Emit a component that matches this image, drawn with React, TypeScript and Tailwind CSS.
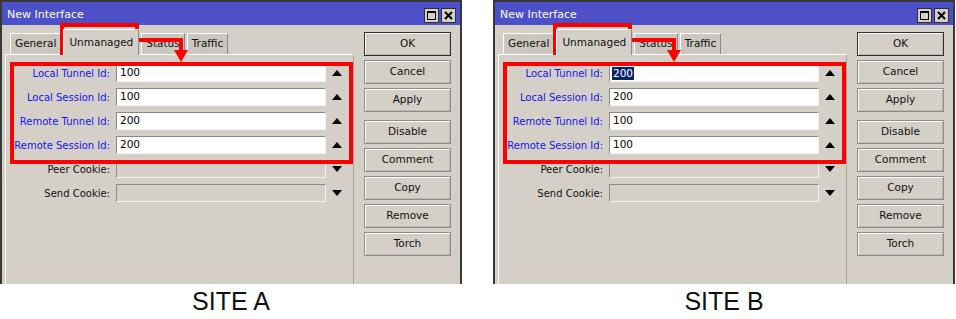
import React from "react";

const font = { fontFamily: '"DejaVu Sans", Verdana, sans-serif' };

function Arrow({ up }: { up: boolean }) {
  return (
    <svg width="10" height="6" viewBox="0 0 10 6" className="block">
      {up ? <polygon points="0,6 10,6 5,0" fill="#000" /> : <polygon points="0,0 10,0 5,6" fill="#000" />}
    </svg>
  );
}

function Field({
  label,
  value,
  blue,
  disabled,
  up,
  selected,
}: {
  label: string;
  value?: string;
  blue?: boolean;
  disabled?: boolean;
  up: boolean;
  selected?: boolean;
}) {
  return (
    <div className="flex h-[24px] items-center">
      <div className={`w-[104px] shrink-0 whitespace-nowrap text-right text-[10px] ${blue ? "text-[#1414f0]" : "text-[#111]"}`}>
        {label}
      </div>
      <div
        className={`ml-[6px] flex h-[18px] w-[210px] items-center border border-t-[#8a8a8a] border-l-[#8a8a8a] border-b-[#f4f4f4] border-r-[#f4f4f4] pl-[2px] text-[10.5px] text-black ${
          disabled ? "bg-[#d4d0c8]" : "bg-white"
        }`}
      >
        {value !== undefined &&
          (selected ? (
            <span className="bg-[#0a246a] px-[1px] leading-[13px] text-white">{value}</span>
          ) : (
            <span className="px-[1px]">{value}</span>
          ))}
      </div>
      <div className="flex w-[22px] justify-center">
        <Arrow up={up} />
      </div>
    </div>
  );
}

function Btn({ label, isDefault }: { label: string; isDefault?: boolean }) {
  return (
    <div
      className={`flex h-[24px] w-[87px] items-center justify-center border text-[10.5px] text-[#111] shadow-[inset_1px_1px_0_#ffffff,inset_-1px_-1px_0_#bcb8b0] ${
        isDefault ? "border-[#303030]" : "border-[#8c8c8c]"
      }`}
    >
      {label}
    </div>
  );
}

function Tab({ label, active }: { label: string; active?: boolean }) {
  return (
    <div
      className={`flex items-center justify-center border-l border-t border-r border-l-white border-t-white border-r-[#8a8a8a] text-[10.5px] text-[#111] ${
        active ? "relative z-10 -mb-[1px] h-[26px] bg-[#d4d0c8] px-[5px]" : "h-[21px] bg-[#cbc7bf] px-[4px]"
      }`}
    >
      {label}
    </div>
  );
}

function Win({ vals, selFirst }: { vals: string[]; selFirst?: boolean }) {
  return (
    <div className="relative flex h-[284px] w-[462px] flex-col border-x-2 border-t-2 border-[#383838] bg-[#d4d0c8]" style={font}>
      <div className="flex h-[23px] items-center justify-between bg-[#4d50c9] pl-[5px] pr-[4px] pt-[3px]">
        <span className="text-[11px] text-white">New Interface</span>
        <div className="flex gap-[2px]">
          <div className="flex h-[15px] w-[15px] items-center justify-center border border-[#303030] bg-[#d4d0c8]">
            <div className="h-[9px] w-[9px] border border-black border-t-2" />
          </div>
          <div className="flex h-[15px] w-[15px] items-center justify-center border border-[#303030] bg-[#d4d0c8]">
            <svg width="9" height="9" viewBox="0 0 9 9">
              <path d="M1 1 L8 8 M8 1 L1 8" stroke="#000" strokeWidth="2" />
            </svg>
          </div>
        </div>
      </div>
      <div className="flex flex-1">
        <div className="flex w-[352px] flex-col pl-[3px]">
          <div className="flex h-[29px] items-end gap-[2px] pl-[5px]">
            <Tab label="General" />
            <Tab label="Unmanaged" active />
            <Tab label="Status" />
            <Tab label="Traffic" />
          </div>
          <div className="flex-1 border-l border-t border-r border-l-white border-t-white border-r-[#a8a49c] pt-[6px]">
            <Field label="Local Tunnel Id:" value={vals[0]} blue up selected={selFirst} />
            <Field label="Local Session Id:" value={vals[1]} blue up />
            <Field label="Remote Tunnel Id:" value={vals[2]} blue up />
            <Field label="Remote Session Id:" value={vals[3]} blue up />
            <Field label="Peer Cookie:" disabled up={false} />
            <Field label="Send Cookie:" disabled up={false} />
          </div>
        </div>
        <div className="flex flex-col pl-[10px] pt-[7px]">
          <Btn label="OK" isDefault />
          <div className="mt-[4px]"><Btn label="Cancel" /></div>
          <div className="mt-[4px]"><Btn label="Apply" /></div>
          <div className="mt-[8px]"><Btn label="Disable" /></div>
          <div className="mt-[4px]"><Btn label="Comment" /></div>
          <div className="mt-[4px]"><Btn label="Copy" /></div>
          <div className="mt-[4px]"><Btn label="Remove" /></div>
          <div className="mt-[4px]"><Btn label="Torch" /></div>
        </div>
      </div>
      {/* annotations */}
      <div className="absolute left-[58px] top-[21px] h-[32px] w-[79px] border-4 border-[#ff0000]" />
      <div className="absolute left-[8px] top-[60px] h-[102px] w-[343px] border-4 border-[#ff0000]" />
      <svg className="absolute left-0 top-0" width="220" height="70" viewBox="0 0 220 70">
        <path d="M135 38 L179 38 L179 52" stroke="#ff0000" strokeWidth="4" fill="none" />
        <polygon points="172,48 186,48 179,60" fill="#ff0000" />
      </svg>
    </div>
  );
}

export default function App() {
  return (
    <div className="h-[319px] w-[956px] bg-white" style={{ fontFamily: '"Liberation Sans", Arial, sans-serif' }}>
      <div className="flex gap-[31px]">
        <Win vals={["100", "100", "200", "200"]} />
        <Win vals={["200", "200", "100", "100"]} selFirst />
      </div>
      <div className="flex">
        <div className="flex h-[35px] w-[462px] items-center justify-center text-[25px] text-[#111]">SITE A</div>
        <div className="ml-[31px] flex h-[35px] w-[462px] items-center justify-center text-[25px] text-[#111]">SITE B</div>
      </div>
    </div>
  );
}
